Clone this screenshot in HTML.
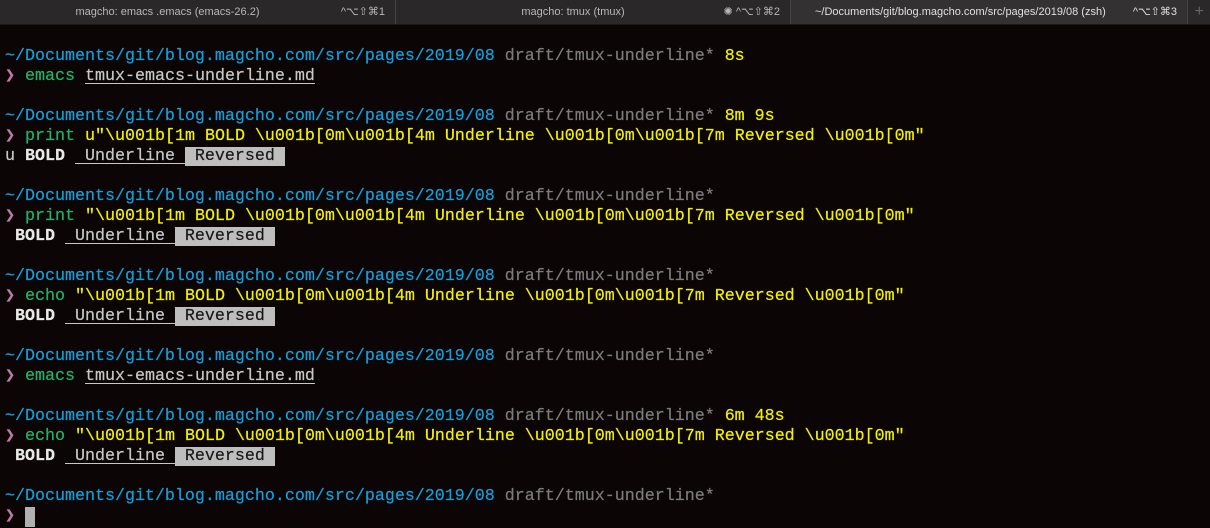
<!DOCTYPE html>
<html><head><meta charset="utf-8"><style>
html,body{margin:0;padding:0;width:1210px;height:528px;overflow:hidden;background:#0c0505;}
.tabs{position:absolute;left:0;top:0;width:1210px;height:24px;background:#2a2829;border-bottom:1px solid #1a1818;font-family:"Liberation Sans",sans-serif;font-size:11px;color:#b8b8b8;white-space:nowrap;}
.tab{position:absolute;top:0;height:24px;line-height:24px;border-right:1px solid #444;}
.tab .t{position:absolute;left:0;right:0;text-align:center;}
.tab .k{position:absolute;right:10px;}
pre{position:absolute;left:5px;top:27px;margin:0;font-family:"Liberation Mono","DejaVu Sans Mono",monospace;font-size:16.67px;line-height:20px;color:#c8c8c8;-webkit-text-stroke:0.2px currentColor;}
.b{color:#12a0dc}.g{color:#7c7c7c}.y{color:#f2f200}.gr{color:#22b36a}.p{color:#c07aa8}
.u{text-decoration:underline;text-underline-offset:3px}
.bo{font-weight:bold;color:#e8e8e8}
.r{background:#bebebe;color:#181818}
.cur{display:inline-block;width:10px;height:20px;background:#b0b0b0;vertical-align:top}
</style></head><body>
<div class="tabs">
<div class="tab" style="left:0;width:395px"><span class="t" style="left:0;right:60px">magcho: emacs .emacs (emacs-26.2)</span><span class="k">^⌥⇧⌘1</span></div>
<div class="tab" style="left:396px;width:394px"><span class="t" style="left:0;right:40px">magcho: tmux (tmux)</span><span class="k">✺ ^⌥⇧⌘2</span></div>
<div class="tab" style="left:791px;width:396px;background:#333132;color:#e0e0e0"><span class="t" style="left:24px;right:auto">~/Documents/git/blog.magcho.com/src/pages/2019/08 (zsh)</span><span class="k">^⌥⇧⌘3</span></div>
<div class="tab" style="left:1188px;width:22px;border:none"><span style="position:absolute;right:6px;color:#666;font-size:16px">+</span></div>
</div>
<pre>

<span class="b">~/Documents/git/blog.magcho.com/src/pages/2019/08</span> <span class="g">draft/tmux-underline*</span> <span class="y">8s</span>
<span class="p">❯</span> <span class="gr">emacs</span> <span class="u">tmux-emacs-underline.md</span>

<span class="b">~/Documents/git/blog.magcho.com/src/pages/2019/08</span> <span class="g">draft/tmux-underline*</span> <span class="y">8m 9s</span>
<span class="p">❯</span> <span class="gr">print</span> <span class="y">u"\u001b[1m BOLD \u001b[0m\u001b[4m Underline \u001b[0m\u001b[7m Reversed \u001b[0m"</span>
u <span class="bo">BOLD</span> <span class="u"> Underline </span><span class="r"> Reversed </span>

<span class="b">~/Documents/git/blog.magcho.com/src/pages/2019/08</span> <span class="g">draft/tmux-underline*</span>
<span class="p">❯</span> <span class="gr">print</span> <span class="y">"\u001b[1m BOLD \u001b[0m\u001b[4m Underline \u001b[0m\u001b[7m Reversed \u001b[0m"</span>
 <span class="bo">BOLD</span> <span class="u"> Underline </span><span class="r"> Reversed </span>

<span class="b">~/Documents/git/blog.magcho.com/src/pages/2019/08</span> <span class="g">draft/tmux-underline*</span>
<span class="p">❯</span> <span class="gr">echo</span> <span class="y">"\u001b[1m BOLD \u001b[0m\u001b[4m Underline \u001b[0m\u001b[7m Reversed \u001b[0m"</span>
 <span class="bo">BOLD</span> <span class="u"> Underline </span><span class="r"> Reversed </span>

<span class="b">~/Documents/git/blog.magcho.com/src/pages/2019/08</span> <span class="g">draft/tmux-underline*</span>
<span class="p">❯</span> <span class="gr">emacs</span> <span class="u">tmux-emacs-underline.md</span>

<span class="b">~/Documents/git/blog.magcho.com/src/pages/2019/08</span> <span class="g">draft/tmux-underline*</span> <span class="y">6m 48s</span>
<span class="p">❯</span> <span class="gr">echo</span> <span class="y">"\u001b[1m BOLD \u001b[0m\u001b[4m Underline \u001b[0m\u001b[7m Reversed \u001b[0m"</span>
 <span class="bo">BOLD</span> <span class="u"> Underline </span><span class="r"> Reversed </span>

<span class="b">~/Documents/git/blog.magcho.com/src/pages/2019/08</span> <span class="g">draft/tmux-underline*</span>
<span class="p">❯</span> <span class="cur"></span></pre>
</body></html>
